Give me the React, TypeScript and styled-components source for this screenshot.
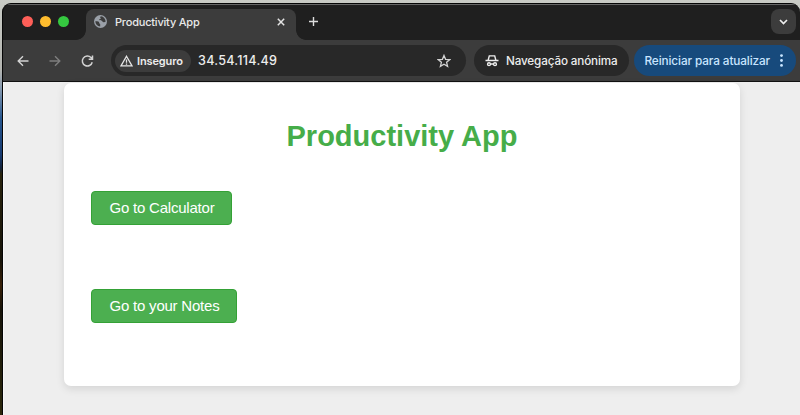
import React from 'react';
import styled, { createGlobalStyle } from 'styled-components';

const GlobalStyle = createGlobalStyle`
  * { box-sizing: border-box; }
  html, body { margin: 0; overflow: hidden; }
  body { font-family: Inter, "Liberation Sans", sans-serif; }
`;

const Desktop = styled.div`
  width: 800px;
  height: 415px;
  padding: 3px 0 0 2px;
  overflow: hidden;
  background: linear-gradient(180deg, #c9cbc5 0, #b4b5b1 70px, #8196ae 90px, #28578f 118px, #173a70 155px, #14233c 168px, #29230d 174px, #17140a 260px, #382009 285px, #17140a 310px, #2b270b 415px);
`;

const Window = styled.div`
  display: flex;
  flex-direction: column;
  height: 412px;
  overflow: hidden;
  border: 1px solid #050505;
  border-width: 1px 0 0 1px;
  border-radius: 9px 9px 0 0;
  background: #1f1f1f;
`;

const TabStrip = styled.div`
  display: flex;
  flex: none;
  height: 36px;
  border-top: 1px solid #666;
  padding-left: 18px;
`;

const TrafficLights = styled.div`
  display: flex;
  gap: 7px;
  width: 55px;
  padding: 11px 0 0 0.5px;
`;

const Light = styled.span<{ $color: string }>`
  width: 11px;
  height: 11px;
  border-radius: 50%;
  background: ${p => p.$color};
`;

const TabFoot = styled.span<{ $side: 'left' | 'right' }>`
  align-self: flex-end;
  width: 10px;
  height: 10px;
  background: radial-gradient(circle at ${p => (p.$side === 'left' ? '0 0' : '100% 0')}, transparent 9.5px, #3c3c3c 10.2px);
`;

const Tab = styled.div`
  display: flex;
  align-items: center;
  width: 209.5px;
  height: 31px;
  margin-top: 4px;
  padding: 0 10.5px 6px 8px;
  border-radius: 8px 8px 0 0;
  background: #3c3c3c;
`;

const TabTitle = styled.span`
  flex: 1;
  margin-left: 8px;
  color: #e9e9e9;
  font-size: 11px;
  font-weight: 500;
  line-height: 14px;
  letter-spacing: -0.2px;
  white-space: nowrap;
`;

const NewTab = styled.span`
  display: flex;
  margin: 11px 0 0 2px;
`;

const TabSearch = styled.span`
  display: flex;
  align-items: center;
  justify-content: center;
  width: 25px;
  height: 25px;
  margin: 4px 4px 0 auto;
  border-radius: 8px;
  background: #3c3c3c;
`;

const Toolbar = styled.div`
  display: flex;
  align-items: center;
  flex: none;
  height: 42px;
  padding: 0 4px 0 13px;
  border-bottom: 1px solid #111;
  background: #3c3c3c;
`;

const Nav = styled.div`
  display: flex;
  gap: 18px;
  width: 95px;
`;

const Pill = styled.div<{ $width: number; $bg?: string; $gap?: number }>`
  display: flex;
  align-items: center;
  flex: none;
  width: ${p => p.$width}px;
  height: 31px;
  margin-right: ${p => p.$gap ?? 0}px;
  border-radius: 16px;
  background: ${p => p.$bg ?? '#282828'};
`;

const Chip = styled.span`
  display: flex;
  align-items: center;
  width: 76px;
  height: 22px;
  margin-left: 4px;
  padding-left: 5px;
  gap: 4px;
  border-radius: 11px;
  background: #3c3c3c;
`;

const Label = styled.span<{ $size: number; $weight?: number; $spacing?: number; $color?: string; $left?: number }>`
  margin-left: ${p => p.$left ?? 0}px;
  color: ${p => p.$color ?? '#ededed'};
  font-size: ${p => p.$size}px;
  font-weight: ${p => p.$weight ?? 500};
  letter-spacing: ${p => p.$spacing ?? 0}px;
  line-height: 16px;
  white-space: nowrap;
`;

const Star = styled.span`
  display: flex;
  margin: 0 14.5px 0 auto;
`;

const Incognito = styled.span`
  display: flex;
  margin-left: 11px;
`;

const Dots = styled.span`
  display: flex;
  margin: 0 12.5px 0 auto;
`;

const Page = styled.main`
  flex: 1;
  min-height: 0;
  padding: 1px 60px 0 60px;
  border-left: 1px solid #f8f8f8;
  background: #eee;
  font-family: "Liberation Sans", Arial, sans-serif;
`;

const Card = styled.section`
  width: 676px;
  height: 303px;
  padding: 35px 27px 0;
  border-radius: 7px;
  background: #fff;
  box-shadow: 0 3px 9px rgba(0, 0, 0, 0.11);
`;

const Heading = styled.h1`
  margin: 0 0 37px;
  color: #46ad49;
  font-size: 29px;
  line-height: 36px;
  text-align: center;
`;

const LinkButton = styled.button<{ $width: number }>`
  display: block;
  width: ${p => p.$width}px;
  height: 34px;
  margin: 0 0 64px;
  padding: 0 0 1px 1px;
  border: 1px solid #34a136;
  border-radius: 4px;
  background: #4caf50;
  color: #fff;
  font: 15px/18px "Liberation Sans", Arial, sans-serif;
  letter-spacing: -0.22px;
`;

const Stroke = ({ w, h, box, color = '#d2d2d2', width = 1.4, children }: { w: number; h: number; box: string; color?: string; width?: number; children: React.ReactNode }) => (
  <svg width={w} height={h} viewBox={box} fill="none" stroke={color} strokeWidth={width}>{children}</svg>
);

export default function App() {
  return (
    <>
      <GlobalStyle />
      <Desktop>
        <Window>
          <TabStrip>
            <TrafficLights>
              <Light $color="#fe5f58" />
              <Light $color="#febc2e" />
              <Light $color="#35c840" />
            </TrafficLights>
            <TabFoot $side="left" />
            <Tab>
              <svg width="13" height="13" viewBox="0 0 13 13">
                <circle cx="6.5" cy="6.5" r="6.5" fill="#9aa0a8" />
                <path d="M7 1.3C5.7 2 6 2.7 6.9 3.2c-.2 1-1.4.6-1.8 1.4-.2.8 1.6.6 2.6 1.1 1.2.6.6 1.4 2 1.6.9.1 1.4-.2 1.9-.5a5.2 5.2 0 0 0-4.6-5.5ZM1.4 5.9c.9.4 2.6.2 3.4.9.7.7-.1 1.4 1 2 .8.4.3 1.6.4 2.8A5.2 5.2 0 0 1 1.4 5.9Z" fill="#3c3c3c" />
              </svg>
              <TabTitle>Productivity App</TabTitle>
              <Stroke w={8} h={8} box="0 0 8 8" color="#e3e3e3" width={1.5}><path d="M.8.8l6.4 6.4M7.2.8.8 7.2" /></Stroke>
            </Tab>
            <TabFoot $side="right" />
            <NewTab>
              <Stroke w={11} h={11} box="0 0 11 11" color="#dedede"><path d="M5.5 1v9M1 5.5h9" /></Stroke>
            </NewTab>
            <TabSearch>
              <Stroke w={9} h={6} box="0 0 9 6" color="#eee" width={1.7}><path d="M1 1l3.5 3.5L8 1" /></Stroke>
            </TabSearch>
          </TabStrip>
          <Toolbar>
            <Nav>
              <Stroke w={14} h={14} box="0 0 14 14"><path d="M12.5 7H2.2M7 2.2 2.2 7 7 11.8" /></Stroke>
              <Stroke w={14} h={14} box="0 0 14 14" color="#7d7d7d"><path d="M1.5 7h10.3M7 2.2 11.8 7 7 11.8" /></Stroke>
              <Stroke w={14} h={14} box="0 0 14 14" width={1.5}><path d="M12.2 8.2A5 5 0 1 1 11 3.6L12.3 5M12.5 1.5v3.8H8.7" /></Stroke>
            </Nav>
            <Pill $width={354.5} $gap={8}>
              <Chip>
                <Stroke w={13} h={12} box="0 0 13 12" color="#e5e5e5" width={1.3}><path d="M6.5 1.3 12 10.9H1L6.5 1.3ZM6.5 4.6v3.1M6.5 8.5v1.2" /></Stroke>
                <Label $size={11} $weight={600} $spacing={-0.12}>Inseguro</Label>
              </Chip>
              <Label $size={12.6} $left={7} $spacing={0.26}>34.54.114.49</Label>
              <Star>
                <Stroke w={14} h={14} box="0 0 14 14" width={1.3}><path d="m7 1.4 1.6 3.9 4.2.3-3.2 2.7 1 4.1L7 10.2l-3.6 2.2 1-4.1-3.2-2.7 4.2-.3L7 1.4Z" /></Stroke>
              </Star>
            </Pill>
            <Pill $width={155.5} $gap={4.5}>
              <Incognito>
                <Stroke w={14} h={13} box="0 0 14 13" color="#eee" width={1.4}>
                  <path d="M.5 6.5h13M3.2 6 4.3 1.9h5.4L10.8 6M5.4 10h3.2" />
                  <circle cx="4" cy="10.2" r="1.45" /><circle cx="10" cy="10.2" r="1.45" />
                </Stroke>
              </Incognito>
              <Label $size={11.7} $left={7.5} $spacing={-0.14}>Navegação anónima</Label>
            </Pill>
            <Pill $width={162} $bg="#174a7c">
              <Label $size={11.8} $left={11} $spacing={-0.12} $color="#c9e5ff">Reiniciar para atualizar</Label>
              <Dots>
                <svg width="3" height="13" viewBox="0 0 3 13" fill="#c9e5ff"><circle cx="1.5" cy="1.6" r="1.4" /><circle cx="1.5" cy="6.5" r="1.4" /><circle cx="1.5" cy="11.4" r="1.4" /></svg>
              </Dots>
            </Pill>
          </Toolbar>
          <Page>
            <Card>
              <Heading>Productivity App</Heading>
              <LinkButton $width={141}>Go to Calculator</LinkButton>
              <LinkButton $width={146}>Go to your Notes</LinkButton>
            </Card>
          </Page>
        </Window>
      </Desktop>
    </>
  );
}
